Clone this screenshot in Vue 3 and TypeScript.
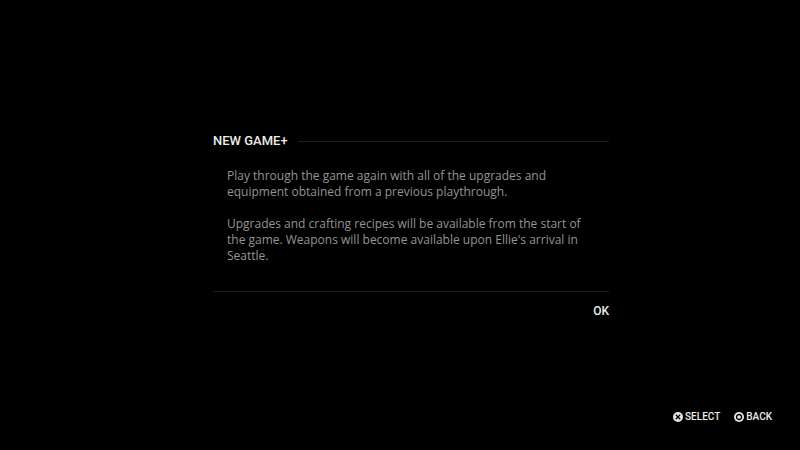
<script setup lang="ts">
const paragraphs: string[][] = [
  [
    'Play through the game again with all of the upgrades and',
    'equipment obtained from a previous playthrough.',
  ],
  [
    'Upgrades and crafting recipes will be available from the start of',
    "the game. Weapons will become available upon Ellie's arrival in",
    'Seattle.',
  ],
]
</script>

<template>
  <main class="screen">
    <section class="dialog" role="dialog" aria-labelledby="dialog-title">
      <header class="heading">
        <h1 id="dialog-title">NEW GAME+</h1>
        <span class="rule"></span>
      </header>
      <div class="body">
        <p v-for="(lines, i) in paragraphs" :key="i">
          <span v-for="line in lines" :key="line" class="line">{{ line }}</span>
        </p>
      </div>
      <footer class="actions">
        <button type="button" class="ok">OK</button>
      </footer>
    </section>
    <nav class="hints">
      <button type="button" class="hint">
        <svg viewBox="0 0 10 10" aria-hidden="true">
          <circle cx="5" cy="5" r="5" fill="#e6e6e6" />
          <path d="M2.8 2.8L7.2 7.2M7.2 2.8L2.8 7.2" stroke="#000" stroke-width="1.3" />
        </svg>
        SELECT
      </button>
      <button type="button" class="hint">
        <svg viewBox="0 0 10 10" aria-hidden="true">
          <circle cx="5" cy="5" r="5" fill="#e6e6e6" />
          <circle cx="5" cy="5" r="2.5" fill="none" stroke="#000" stroke-width="1.3" />
        </svg>
        BACK
      </button>
    </nav>
  </main>
</template>

<style>
body {
  background: #000;
}
</style>

<style scoped>
.screen {
  box-sizing: border-box;
  min-height: 100vh;
  display: flex;
  flex-direction: column;
  justify-content: space-between;
  padding: 132px 28px 25px 50px;
  background: #000;
  color: #ebebeb;
  font-family: Roboto, "Liberation Sans", sans-serif;
}
.dialog {
  width: 100%;
  max-width: 396px;
  margin: 0 auto;
}
.heading {
  display: flex;
  align-items: center;
  gap: 10px;
}
h1 {
  margin: 0;
  font-size: 13px;
  line-height: 18px;
  font-weight: 500;
}
.rule {
  flex: 1;
  height: 1px;
  background: #1c1c1c;
}
.body {
  display: flex;
  flex-direction: column;
  gap: 16px;
  padding: 18px 14px 27px;
  border-bottom: 1px solid #1c1c1c;
  color: #949494;
  font-family: "Open Sans", Roboto, sans-serif;
  font-size: 12px;
  line-height: 16px;
}
p {
  margin: 0;
}
.line {
  display: block;
  white-space: nowrap;
}
.actions {
  display: flex;
  justify-content: flex-end;
  padding-top: 10px;
}
button {
  padding: 0;
  border: 0;
  background: none;
  color: inherit;
  font-family: inherit;
  font-weight: 500;
}
.ok {
  font-size: 12px;
  line-height: 18px;
}
.hints {
  display: flex;
  justify-content: flex-end;
  gap: 14px;
}
.hint {
  display: flex;
  align-items: center;
  gap: 2px;
  font-size: 10px;
  line-height: 16px;
}
.hint svg {
  width: 10px;
  height: 10px;
}
</style>
